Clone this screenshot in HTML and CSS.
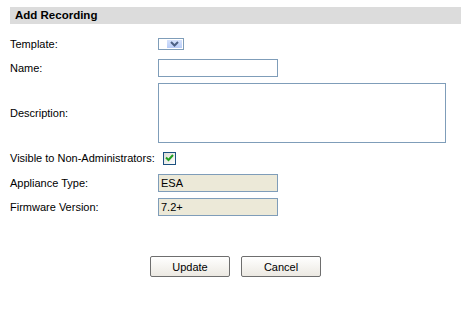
FILE: index.html
```html
<!DOCTYPE html>
<html lang="en">
<head>
    <meta charset="UTF-8">
    <title>Add Recording</title>
    <link rel="stylesheet" href="styles.css">
</head>
<body>
    <div class="container">
        <h1 class="section-title">Add Recording</h1>
        <form class="record-form">
            <div class="form-row">
                <label>Template:</label>
                <span class="fake-select">
                    <span class="select-arrow">
                        <svg width="9" height="6" viewBox="0 0 9 6"><path d="M1 1 L4.5 4.5 L8 1" fill="none" stroke="#4d6185" stroke-width="2"/></svg>
                    </span>
                </span>
            </div>
            <div class="form-row">
                <label for="name">Name:</label>
                <input type="text" id="name" class="text-input">
            </div>
            <div class="form-row">
                <label for="desc">Description:</label>
                <textarea id="desc" class="text-area"></textarea>
            </div>
            <div class="form-row spaced">
                <label>Visible to Non-Administrators:</label>
                <span class="check-box">
                    <svg width="9" height="8" viewBox="0 0 9 8"><path d="M1 3.5 L3.5 6 L8 1" fill="none" stroke="#21a121" stroke-width="2"/></svg>
                </span>
            </div>
            <div class="form-row">
                <label>Appliance Type:</label>
                <input type="text" class="text-input readonly" value="ESA" readonly>
            </div>
            <div class="form-row">
                <label>Firmware Version:</label>
                <input type="text" class="text-input readonly" value="7.2+" readonly>
            </div>
            <div class="button-row">
                <button type="button">Update</button>
                <button type="button">Cancel</button>
            </div>
        </form>
    </div>
</body>
</html>
```

FILE: styles.css
```css
body {
    font-family: Tahoma, "Liberation Sans", Arial, sans-serif;
    font-size: 11px;
    margin: 0;
    padding: 0;
    background-color: #fff;
    color: #000;
}
.container {
    padding: 7px 8px 0 10px;
}
.section-title {
    margin: 0;
    height: 17px;
    line-height: 17px;
    padding-left: 5px;
    font-size: 11.5px;
    font-weight: bold;
    background-color: #dcdcdc;
}
.record-form {
    margin-top: 11px;
}
.form-row {
    display: flex;
    align-items: center;
    min-height: 18px;
    margin-bottom: 6px;
}
.form-row.spaced {
    margin-bottom: 7px;
}
.form-row label {
    width: 148px;
    flex-shrink: 0;
    white-space: nowrap;
}
.text-input {
    width: 120px;
    height: 18px;
    box-sizing: border-box;
    border: 1px solid #7f9db9;
    padding: 0 2px;
    margin: 0;
    font-family: inherit;
    font-size: 11px;
    background-color: #fff;
}
.text-input.readonly {
    background-color: #ece9d8;
}
.text-area {
    width: 288px;
    height: 60px;
    box-sizing: border-box;
    border: 1px solid #7f9db9;
    margin: 0;
    resize: none;
}
.fake-select {
    display: flex;
    justify-content: flex-end;
    width: 26px;
    height: 12px;
    box-sizing: border-box;
    border: 1px solid #7f9db9;
    padding: 1px;
}
.select-arrow {
    display: flex;
    align-items: center;
    justify-content: center;
    width: 15px;
    background: linear-gradient(#d6e2fc, #b9cdf9);
}
.check-box {
    display: flex;
    align-items: center;
    justify-content: center;
    width: 13px;
    height: 13px;
    box-sizing: border-box;
    margin-left: 15px;
    border: 1px solid #1c5180;
    background: linear-gradient(135deg, #dcdcd6, #fff);
}
.form-row.spaced label {
    width: 138px;
}
.button-row {
    display: flex;
    justify-content: center;
    gap: 11px;
    margin-top: 40px;
}
.button-row button {
    width: 80px;
    height: 21px;
    border: 1px solid #6e6e6e;
    border-radius: 2px;
    background: linear-gradient(#fff, #ece9e2);
    font-family: inherit;
    font-size: 11px;
    color: #000;
    padding: 0;
}
```
